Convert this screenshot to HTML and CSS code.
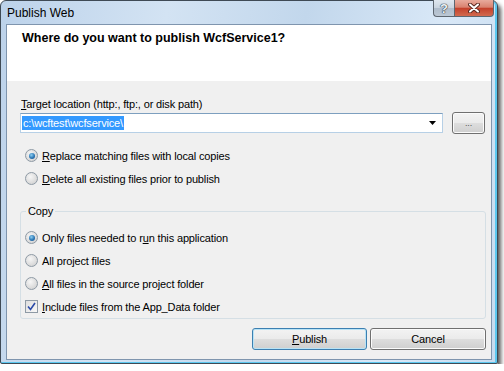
FILE: index.html
```html
<!DOCTYPE html>
<html lang="en">
<head>
    <meta charset="UTF-8">
    <title>Publish Web</title>
    <link rel="stylesheet" href="styles.css">
</head>
<body>
    <div class="window">
        <div class="titlebar">
            <span class="title">Publish Web</span>
            <div class="caption-buttons">
                <span class="cap-btn help">?</span>
                <span class="cap-btn close">
                    <svg width="12" height="10" viewBox="0 0 12 10">
                        <path d="M2 1.5 L10 8.5 M10 1.5 L2 8.5" stroke="#5a2a22" stroke-width="4" stroke-linecap="round"/>
                        <path d="M2 1.5 L10 8.5 M10 1.5 L2 8.5" stroke="#ffffff" stroke-width="2" stroke-linecap="round"/>
                    </svg>
                </span>
            </div>
        </div>
        <div class="client">
            <div class="header">Where do you want to publish WcfService1?</div>
            <div class="content">
                <div class="field-label"><u>T</u>arget location (http:, ftp:, or disk path)</div>
                <div class="location-row">
                    <div class="combo">
                        <span class="selection">c:\wcftest\wcfservice\</span>
                        <svg class="arrow" width="7" height="4" viewBox="0 0 7 4"><path d="M0 0 H7 L3.5 4 Z" fill="#000"/></svg>
                    </div>
                    <button class="btn browse">...</button>
                </div>
                <div class="options">
                    <div class="option"><span class="radio checked"></span><span><u>R</u>eplace matching files with local copies</span></div>
                    <div class="option"><span class="radio"></span><span><u>D</u>elete all existing files prior to publish</span></div>
                </div>
                <fieldset class="group">
                    <legend>Copy</legend>
                    <div class="option"><span class="radio checked"></span><span>Only files needed to r<u>u</u>n this application</span></div>
                    <div class="option"><span class="radio"></span><span>All pro<u>j</u>ect files</span></div>
                    <div class="option"><span class="radio"></span><span><u>A</u>ll files in the source project folder</span></div>
                    <div class="option">
                        <span class="checkbox">
                            <svg width="9" height="9" viewBox="0 0 9 9"><path d="M1 4.5 L3.5 7.5 L8 1" fill="none" stroke="#2a4aa8" stroke-width="1.6"/></svg>
                        </span>
                        <span><u>I</u>nclude files from the App_Data folder</span>
                    </div>
                </fieldset>
                <div class="actions">
                    <button class="btn primary"><u>P</u>ublish</button>
                    <button class="btn cancel">Cancel</button>
                </div>
            </div>
        </div>
    </div>
</body>
</html>
```

FILE: styles.css
```css
body {
    margin: 0;
    background: #ffffff;
    font-family: "Liberation Sans", Arial, sans-serif;
    font-size: 11px;
    letter-spacing: -0.15px;
    color: #000000;
}

.window {
    box-sizing: border-box;
    width: 498px;
    height: 364px;
    border: 1px solid #3f4a55;
    border-radius: 6px 6px 2px 2px;
    background: linear-gradient(100deg, #bcd2ea 0%, #d3e3f3 30%, #c2d7ec 55%, #d9e8f7 80%, #c6dbef 100%);
    box-shadow: 3px 4px 4px rgba(0, 0, 0, 0.65), inset -2px 0 0 #5bc8f0, inset 0 -1px 0 #5bc8f0;
    display: flex;
    flex-direction: column;
}

.titlebar {
    height: 23px;
    display: flex;
    justify-content: space-between;
    align-items: flex-start;
}

.title {
    padding: 5px 0 0 6px;
    font-size: 12px;
    line-height: 14px;
    letter-spacing: 0;
}

.caption-buttons {
    display: flex;
    margin-right: 3px;
    margin-top: -1px;
}

.cap-btn {
    height: 17px;
    display: flex;
    align-items: center;
    justify-content: center;
    box-sizing: border-box;
    border: 1px solid #5d6670;
    border-top: none;
}

.help {
    width: 21px;
    border-radius: 0 0 0 4px;
    border-right: none;
    background: linear-gradient(#dfe7ef 0%, #c9d4df 50%, #aebccb 51%, #bcc8d4 100%);
    color: #eef2f6;
    font-weight: bold;
    font-size: 13px;
    text-shadow: 0 0 1px #2e3a46, 0 0 1px #2e3a46, 0 0 1px #2e3a46;
}

.close {
    width: 40px;
    border-radius: 0 0 4px 0;
    background: linear-gradient(#e8aa9c 0%, #d9826f 45%, #c4412b 52%, #d26a4f 100%);
}

.client {
    flex: 1;
    margin: 0 5px 3px 5px;
    border: 1px solid #7f95ae;
    background: #f0f0f0;
    display: flex;
    flex-direction: column;
}

.header {
    height: 56px;
    box-sizing: border-box;
    padding: 5px 0 0 15px;
    background: #ffffff;
    font-size: 12.5px;
    font-weight: bold;
    line-height: 16px;
    letter-spacing: 0;
}

.content {
    padding: 0 5px 0 13px;
}

.field-label {
    margin-top: 15px;
    line-height: 16px;
    padding-left: 1px;
}

.location-row {
    display: flex;
    align-items: center;
    height: 22px;
    gap: 9px;
}

.combo {
    box-sizing: border-box;
    width: 423px;
    height: 20px;
    border: 1px solid #b7d0e6;
    border-top-color: #7d9fbf;
    background: #ffffff;
    display: flex;
    align-items: center;
    justify-content: space-between;
    padding: 0 6px 0 1px;
}

.selection {
    background: #3399ff;
    color: #ffffff;
    padding: 0 1px;
    line-height: 14px;
}

.btn {
    box-sizing: border-box;
    height: 22px;
    border: 1px solid #707070;
    border-radius: 3px;
    background: linear-gradient(#f3f3f3 0%, #ebebeb 48%, #dddddd 52%, #cfcfcf 100%);
    box-shadow: inset 0 0 0 1px #fbfbfb;
    font-family: inherit;
    font-size: 11px;
    letter-spacing: inherit;
    color: #000000;
    padding: 0;
}

.browse {
    width: 33px;
    font-size: 9px;
    color: #555555;
}

.options {
    margin-top: 10px;
}

.option {
    display: flex;
    align-items: center;
    height: 23px;
    gap: 4px;
}

.radio {
    box-sizing: border-box;
    width: 13px;
    height: 13px;
    margin-left: 5px;
    border-radius: 50%;
    border: 1px solid #8e9aa5;
    background: radial-gradient(circle at 40% 35%, #f6f6f6 0%, #d8d8d8 70%, #c4c4c4 100%);
    display: flex;
    align-items: center;
    justify-content: center;
}

.radio.checked::after {
    content: "";
    width: 6px;
    height: 6px;
    border-radius: 50%;
    background: radial-gradient(circle at 40% 35%, #8fd0f2 0%, #2b77b5 55%, #1b4f86 100%);
}

.checkbox {
    box-sizing: border-box;
    width: 13px;
    height: 13px;
    margin-left: 5px;
    border: 1px solid #8e9aa5;
    background: linear-gradient(135deg, #dedede, #f8f8f8);
    display: flex;
    align-items: center;
    justify-content: center;
}

.group {
    margin: 13px 0 0 0;
    padding: 7px 0 0 0;
    border: 1px solid #d5dfe5;
    border-radius: 3px;
}

.group legend {
    margin-left: 5px;
    padding: 0 2px;
    line-height: 16px;
}

.group .radio,
.group .checkbox {
    margin-left: 4px;
}

.actions {
    margin-top: 9px;
    display: flex;
    justify-content: flex-end;
    gap: 3px;
}

.primary {
    width: 115px;
    border-color: #3c7fb1;
    box-shadow: inset 0 0 0 1px #b8e3f6;
}

.cancel {
    width: 116px;
}
```
